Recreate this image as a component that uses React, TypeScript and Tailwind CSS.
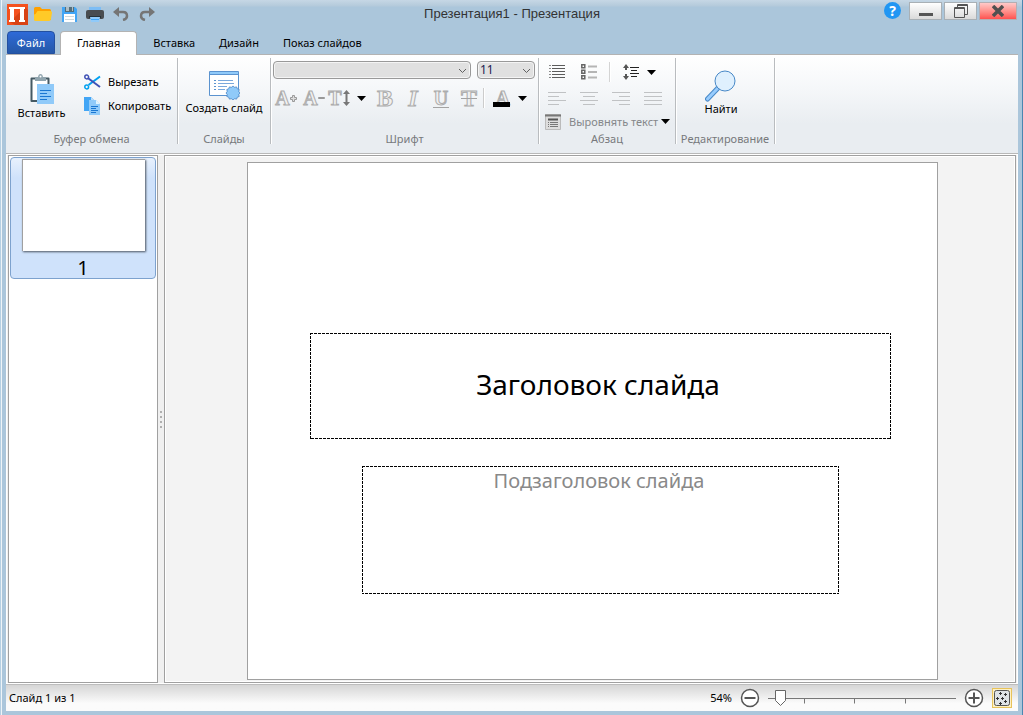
import { useState } from "react";
import type { ReactNode } from "react";

const TABS = ["Главная", "Вставка", "Дизайн", "Показ слайдов"];

const ALIGNMENTS = [
  { label: "По левому краю", d: "M1 1.5h18M1 5.5h11M1 9.5h18M1 13.5h11" },
  { label: "По центру", d: "M1 1.5h18M4 5.5h12M1 9.5h18M4 13.5h12" },
  { label: "По правому краю", d: "M1 1.5h18M8 5.5h11M1 9.5h18M8 13.5h11" },
  { label: "По ширине", d: "M1 1.5h18M1 5.5h18M1 9.5h18M1 13.5h18" },
];

function Caret() {
  return (
    <svg width="9" height="5" viewBox="0 0 9 5" className="shrink-0">
      <path d="M0 0h9L4.5 5z" fill="#000" />
    </svg>
  );
}

function IconButton({ label, className = "", children }: { label: string; className?: string; children: ReactNode }) {
  return (
    <button type="button" aria-label={label} className={`flex shrink-0 items-center justify-center ${className}`}>
      {children}
    </button>
  );
}

function LogoIcon() {
  return (
    <svg width="21" height="21" viewBox="0 0 21 21">
      <path d="M0 0h21v21H0z" fill="#f4511e" />
      <path d="M18 3l3 3v15H8l-5-3z" fill="#d84315" />
      <path d="M2 3h16v2h-1v11h1v2h-6v-2h1V5H7v11h1v2H2v-2h1V5H2z" fill="#fff" />
    </svg>
  );
}

function FolderIcon() {
  return (
    <svg width="18" height="16" viewBox="0 0 18 16">
      <path d="M1.500 1H6l2 2h7.500q1.500 0 1.500 1.500V14H0V2.500Q0 1 1.500 1z" fill="#ffa000" />
      <path d="M3.500 5H16.500q1.500 0 1.500 1.500L17 13q-.3 2-2 2H1.500Q0 15 0 13.500V9q0-1 1.500-1z" fill="#ffca28" />
    </svg>
  );
}

function SaveIcon() {
  return (
    <svg width="17" height="17" viewBox="0 0 17 17">
      <path d="M1 1h13l2 2v13H1z" fill="#42a5f5" />
      <path d="M4 1h9v5H4z" fill="#546e7a" />
      <path d="M5 1h3v4H5zM11 1h1v4h-1z" fill="#b0bec5" />
      <path d="M3 8h11v8H3z" fill="#fff" />
      <path d="M4 10.500h9M4 13.500h9" stroke="#cfd8dc" />
    </svg>
  );
}

function PrintIcon() {
  return (
    <svg width="18" height="17" viewBox="0 0 18 17">
      <path d="M3 1h12v5H3z" fill="#7dbdf5" />
      <path d="M2 4h14q2 0 2 2v5q0 2-2 2H2q-2 0-2-2V6q0-2 2-2z" fill="#484c50" />
      <path d="M3 10h12v2H3z" fill="#263238" />
      <path d="M4 11h10l-1 5H5z" fill="#90caf9" />
      <path d="M5 13.500h8" stroke="#42a5f5" />
    </svg>
  );
}

function UndoIcon() {
  return (
    <svg width="16" height="14" viewBox="0 0 16 14">
      <path d="M6 0v10L0 5z" fill="#757575" />
      <path d="M5 5h5q4 0 4 4 0 3-4 4" fill="none" stroke="#757575" strokeWidth="2.500" />
    </svg>
  );
}

function RedoIcon() {
  return (
    <svg width="16" height="14" viewBox="0 0 16 14">
      <path d="M10 0v10l6-5z" fill="#757575" />
      <path d="M11 5H6Q2 5 2 9q0 3 4 4" fill="none" stroke="#757575" strokeWidth="2.500" />
    </svg>
  );
}

function PasteIcon() {
  return (
    <svg width="24" height="30" viewBox="0 0 24 30">
      <path d="M1.500 4.500h17V27h-17z" fill="#fff" stroke="#455a64" strokeWidth="2" strokeLinejoin="round" />
      <path d="M5 3h3q.5-3 2.500-3T13 3h3v4H5z" fill="#90a4ae" />
      <circle cx="10.500" cy="2.500" r="1" fill="#fff" />
      <path d="M7 10h17v20H7z" fill="#90caf9" />
      <path d="M10 16.500h11M10 19.500h7M10 22.500h11M10 25.500h7" stroke="#1976d2" />
    </svg>
  );
}

function CutIcon() {
  return (
    <svg width="17" height="16" viewBox="0 0 17 16" fill="none">
      <path d="M4.500 11L16 2.500" stroke="#00a0f0" strokeWidth="2" />
      <path d="M4.500 4.500L16 13" stroke="#3f51b5" strokeWidth="2" />
      <circle cx="2.700" cy="3" r="1.900" stroke="#3f51b5" strokeWidth="1.500" />
      <circle cx="2.700" cy="13" r="1.900" stroke="#00a0f0" strokeWidth="1.500" />
    </svg>
  );
}

function CopyIcon() {
  return (
    <svg width="16" height="18" viewBox="0 0 16 18">
      <path d="M0 0h7l4 4v10H0z" fill="#42a5f5" />
      <path d="M7 0v4h4z" fill="#bbdefb" />
      <path d="M5 3h7l4 4v11H5z" fill="#90caf9" />
      <path d="M12 3v4h4z" fill="#e1f5fe" />
      <path d="M7 9.500h7M7 11.500h5M7 13.500h7M7 15.500h5" stroke="#1976d2" />
    </svg>
  );
}

function NewSlideIcon() {
  return (
    <svg width="32" height="30" viewBox="0 0 32 30">
      <path d="M1.500 1.500h29v24h-29z" fill="#fff" stroke="#5b93cf" />
      <path d="M2 2h28v3H2z" fill="#90caf9" />
      <path d="M1 4.500h30" stroke="#5b93cf" />
      <path d="M6 10.500h2M6 13.500h2M6 16.500h2M6 19.500h2" stroke="#5b93cf" />
      <path d="M10 10.500h15M10 13.500h16M10 16.500h9M10 19.500h7" stroke="#7aa8dc" />
      <path
        d="M25 16l1.600 1.300 2-.4.700 1.900 1.900.7-.4 2L32 23l-1.200 1.500.4 2-1.900.7-.7 1.900-2-.4L25 30l-1.600-1.300-2 .4-.7-1.900-1.900-.7.4-2L18 23l1.200-1.500-.4-2 1.900-.7.700-1.900 2 .4z"
        fill="#90caf9"
        stroke="#4a85c5"
        strokeWidth="0.800"
      />
    </svg>
  );
}

function SearchIcon() {
  return (
    <svg width="31" height="32" viewBox="0 0 31 32">
      <path d="M13 18L2.500 29" stroke="#4788c7" strokeWidth="5" strokeLinecap="round" />
      <path d="M13 18L2.500 29" stroke="#98ccfd" strokeWidth="3" strokeLinecap="round" />
      <circle cx="20" cy="11" r="10" fill="#dff0fe" stroke="#4788c7" />
    </svg>
  );
}

// Disabled format letters: hollow glyphs with a grey contour
function Letter({ children, className = "" }: { children: string; className?: string }) {
  return (
    <span
      className={`font-['Liberation_Serif',serif] font-bold leading-5 text-[#f0f0f0] [-webkit-text-stroke:1px_#acacac] ${className}`}
    >
      {children}
    </span>
  );
}

function Group({ title, className, children }: { title: string; className: string; children: ReactNode }) {
  return (
    <section
      aria-label={title}
      className={`flex h-[86px] shrink-0 flex-col border-r border-[#b9bcbf] shadow-[1px_0_0_#fff] ${className}`}
    >
      <div className="flex-1">{children}</div>
      <h2 className="h-[11px] text-center text-[11px] leading-3 text-[#77797c]">{title}</h2>
    </section>
  );
}

function Chevron() {
  return (
    <svg width="9" height="6" viewBox="0 0 9 6" className="pointer-events-none absolute right-1 top-[7px]">
      <path d="M1 1l3.500 3.500L8 1" fill="none" stroke="#606060" />
    </svg>
  );
}

function Outline() {
  return (
    <svg className="pointer-events-none absolute inset-0 h-full w-full" aria-hidden="true">
      <rect width="100%" height="100%" fill="none" stroke="#000" strokeWidth="2" strokeDasharray="3 1" />
    </svg>
  );
}

function TitleBar() {
  return (
    <header className="grid h-[31px] grid-cols-[1fr_auto_1fr] items-start bg-[linear-gradient(#c6d7e5,#b4cadb_6px,#abc6db_7px)]">
      <div className="flex h-7 items-center pl-[2px]">
        <span className="flex w-[26px] justify-center">
          <LogoIcon />
        </span>
        <IconButton label="Открыть" className="w-[26px]"><FolderIcon /></IconButton>
        <IconButton label="Сохранить" className="w-[26px]"><SaveIcon /></IconButton>
        <IconButton label="Печать" className="w-[26px]"><PrintIcon /></IconButton>
        <IconButton label="Отменить" className="w-[26px]"><UndoIcon /></IconButton>
        <IconButton label="Повторить" className="w-[26px]"><RedoIcon /></IconButton>
      </div>
      <h1 className="pt-[6px] font-['Liberation_Sans',sans-serif] text-[13px] leading-4 text-[#333]">
        Презентация1 - Презентация
      </h1>
      <div className="flex justify-end gap-[2px] pr-[5px] pt-[2px]">
        <IconButton label="Справка" className="mr-[6px] h-[17px] w-[17px] rounded-full bg-[#2196f3] text-sm font-bold text-white">
          ?
        </IconButton>
        <IconButton label="Свернуть" className="h-[18px] w-[33px] border border-[#a9b0b5] bg-linear-to-b from-white to-[#dadada]">
          <svg width="14" height="16" viewBox="0 0 14 16"><path d="M0 10h14v3H0z" fill="#555" /></svg>
        </IconButton>
        <IconButton label="Развернуть" className="h-[18px] w-[33px] border border-[#a9b0b5] bg-linear-to-b from-white to-[#dadada]">
          <svg width="14" height="14" viewBox="0 0 14 14" fill="none" stroke="#555">
            <path d="M3.500 3V.5h10v10H11M3 1.500h11" />
            <path d="M.5 3.500h10v10H.5zM0 4.500h11" />
          </svg>
        </IconButton>
        <IconButton label="Закрыть" className="h-[18px] w-[38px] border border-[#b5aeb2] bg-linear-to-b from-[#ffc9c9] to-[#ff5050]">
          <svg width="12" height="12" viewBox="0 0 12 12"><path d="M1 1l10 10M11 1L1 11" stroke="#505050" strokeWidth="3.500" /></svg>
        </IconButton>
      </div>
    </header>
  );
}

function TabBar({ active, onSelect }: { active: string; onSelect: (tab: string) => void }) {
  return (
    <nav className="flex h-[24px] border-b border-[#b3b3b3] pl-[1px] text-[11px] leading-[22px]">
      <button type="button" className="mr-[5px] h-[23px] w-[48px] rounded-t-sm border border-[#2350a0] bg-linear-to-b from-[#2e6ad8] to-[#2558a8] leading-[22px] text-white">
        Файл
      </button>
      {TABS.map((tab) => (
        <button
          key={tab}
          type="button"
          onClick={() => onSelect(tab)}
          className={
            tab === active
              ? "mr-1 h-[24px] rounded-t-sm border border-b-0 border-[#b3b3b3] bg-white px-4 pb-[2px]"
              : "px-3"
          }
        >
          {tab}
        </button>
      ))}
    </nav>
  );
}

function Ribbon() {
  return (
    <div className="flex h-[99px] overflow-hidden border-b border-[#b8b8b8] bg-[linear-gradient(#fff,#f5f7f9_35%,#e9edf1_70%)] pt-[3px] text-[11px] leading-[14px]">
      <Group title="Буфер обмена" className="w-[172px]">
        <div className="flex">
          <button type="button" className="flex w-[71px] flex-col items-center gap-[2px] pt-4">
            <PasteIcon />
            Вставить
          </button>
          <div className="flex flex-col pl-[7px] pt-3">
            <button type="button" className="flex h-6 items-center">
              <span className="w-[24px]"><CutIcon /></span>
              Вырезать
            </button>
            <button type="button" className="flex h-6 items-center">
              <span className="w-[24px]"><CopyIcon /></span>
              Копировать
            </button>
          </div>
        </div>
      </Group>
      <Group title="Слайды" className="w-[93px]">
        <button type="button" className="flex w-full flex-col items-center gap-[1px] whitespace-nowrap pt-3">
          <NewSlideIcon />
          Создать слайд
        </button>
      </Group>
      <Group title="Шрифт" className="w-[268px]">
        <div className="flex gap-[6px] pl-[2px] pt-[3px]">
          <div className="relative w-[198px]">
            <select aria-label="Шрифт" className="h-[18px] w-full appearance-none rounded-sm border border-[#999] bg-[#e0e0e0] shadow-[inset_0_0_0_1px_#f4f4f4]">
              <option></option>
            </select>
            <Chevron />
          </div>
          <div className="relative w-[58px]">
            <select aria-label="Размер" className="h-[18px] w-full appearance-none rounded-sm border border-[#999] bg-[#e0e0e0] pl-[2px] text-xs leading-4 text-[#1c1c50] shadow-[inset_0_0_0_1px_#f4f4f4]">
              <option>11</option>
            </select>
            <Chevron />
          </div>
        </div>
        <div className="flex items-center pl-px pt-[7px] [&>button]:h-6">
          <IconButton label="Увеличить шрифт" className="w-[28px]">
            <Letter className="text-xl">A</Letter>
            <svg width="7" height="7" viewBox="0 0 7 7"><path d="M2.500.5h2v2h2v2h-2v2h-2v-2h-2v-2h2z" fill="#ddd" stroke="#999" /></svg>
          </IconButton>
          <IconButton label="Уменьшить шрифт" className="w-[28px]">
            <Letter className="text-xl">A</Letter>
            <svg width="7" height="7" viewBox="0 0 7 7"><path d="M.5 2.500h6v1h-6z" fill="#ddd" stroke="#999" /></svg>
          </IconButton>
          <IconButton label="Интервал" className="w-[38px] gap-[1px]">
            <Letter className="text-xl">T</Letter>
            <svg width="7" height="16" viewBox="0 0 7 16"><path d="M3.500 0L7 4H4.500v8H7l-3.500 4L0 12h2.500V4H0z" fill="#777" /></svg>
            <span className="pl-[6px]"><Caret /></span>
          </IconButton>
          <IconButton label="Полужирный" className="ml-[5px] w-[28px]"><Letter className="text-2xl">B</Letter></IconButton>
          <IconButton label="Курсив" className="w-[28px]"><Letter className="text-2xl italic">I</Letter></IconButton>
          <IconButton label="Подчёркнутый" className="relative w-[28px]">
            <Letter className="text-xl">U</Letter>
            <span className="absolute bottom-[2px] h-px w-4 bg-[#a3a3a3]" />
          </IconButton>
          <IconButton label="Зачёркнутый" className="relative w-[28px]">
            <Letter className="text-2xl">T</Letter>
            <span className="absolute top-3 h-px w-4 bg-[#a3a3a3]" />
          </IconButton>
          <span className="h-5 w-[2px] border-l border-[#ccc] bg-white" />
          <IconButton label="Цвет текста" className="relative ml-[2px] w-[40px] justify-end! gap-2">
            <Letter className="text-xl">A</Letter>
            <span className="absolute bottom-[3px] left-[6px] h-[5px] w-[17px] bg-black" />
            <Caret />
          </IconButton>
        </div>
      </Group>
      <Group title="Абзац" className="w-[137px]">
        <div className="flex h-[28px] items-center pl-[10px]">
          <IconButton label="Маркеры" className="w-4">
            <svg width="16" height="16" viewBox="0 0 16 16">
              <path d="M0 1.500h2M0 4.500h2M0 7.500h2M0 10.500h2M0 13.500h2" stroke="#888" />
              <path d="M3 1.500h13M3 4.500h13M3 7.500h13M3 10.500h13M3 13.500h13" stroke="#5c5c5c" />
            </svg>
          </IconButton>
          <IconButton label="Список" className="ml-4 w-4">
            <svg width="16" height="16" viewBox="0 0 16 16">
              <path d="M.8.8h3v3h-3zM.8 6.300h3v3h-3zM.8 11.800h3v3h-3z" fill="none" stroke="#666" strokeWidth="1.500" />
              <path d="M7 2.500h9M7 8h9M7 13.500h9" stroke="#b5b5b5" strokeWidth="2" />
            </svg>
          </IconButton>
          <span className="mx-3 h-5 w-[2px] border-l border-[#d4d4d4] bg-white" />
          <IconButton label="Междустрочный интервал" className="gap-2">
            <svg width="16" height="16" viewBox="0 0 16 16">
              <path d="M0 4l3-4 3 4H4v2H2V4zM0 12l3 4 3-4H4v-2H2v2z" fill="#555" />
              <path d="M7 3.500h9M8 6.500h6M7 9.500h9M8 12.500h6" stroke="#222" />
            </svg>
            <Caret />
          </IconButton>
        </div>
        <div className="flex h-[25px] items-center gap-3 pl-2">
          {ALIGNMENTS.map((item) => (
            <IconButton key={item.label} label={item.label} className="w-5">
              <svg width="20" height="15" viewBox="0 0 20 15"><path d={item.d} stroke="#c0c2c4" /></svg>
            </IconButton>
          ))}
        </div>
        <button type="button" className="flex h-[21px] w-full items-center pl-[6px] text-[#85878a]">
          <svg width="16" height="16" viewBox="0 0 16 16">
            <path d="M.5.5h15v15H.5z" fill="#ddd" stroke="#bbb" />
            <path d="M0 1.500h16" stroke="#777" strokeWidth="2" />
            <path d="M3 5.500h10" stroke="#555" strokeWidth="2" />
            <path d="M3 8.500h1M5 8.500h8M3 10.500h1M5 10.500h8M3 12.500h1M5 12.500h8" stroke="#777" />
          </svg>
          <span className="whitespace-nowrap pl-2 pr-[3px]">Выровнять текст</span>
          <Caret />
        </button>
      </Group>
      <Group title="Редактирование" className="w-[99px]">
        <button type="button" className="mx-auto flex flex-col items-center pr-[8px] pt-3">
          <SearchIcon />
          Найти
        </button>
      </Group>
    </div>
  );
}

function StatusBar() {
  const [zoom, setZoom] = useState(54);
  return (
    <footer className="flex h-[27px] items-center border-t border-[#bdbdbd] bg-linear-to-b from-[#d6d6d6] to-[#fbfbfb] to-70% pl-[3px] pr-[6px] text-[11px] leading-[14px]">
      <span className="flex-1">Слайд 1 из 1</span>
      <label htmlFor="zoom" className="pr-2">{zoom}%</label>
      <IconButton label="Уменьшить">
        <svg width="20" height="20" viewBox="0 0 20 20" fill="none" stroke="#555">
          <circle cx="10" cy="10" r="8.500" fill="#fff" strokeWidth="1.500" />
          <path d="M4.500 10h11" strokeWidth="2" />
        </svg>
      </IconButton>
      <div className="relative mx-[7px] h-5 w-[190px]">
        <svg width="190" height="20" viewBox="0 0 190 20">
          <path d="M1 10.500h188M37.500 10.500v5M87.500 10.500v5M138.500 10.500v5" stroke="#777" fill="none" />
          <path d="M8.500 2.500h10v10l-5 5-5-5z" fill="#fff" stroke="#666" />
        </svg>
        <input
          id="zoom"
          type="range"
          min={50}
          max={200}
          value={zoom}
          onChange={(e) => setZoom(Number(e.target.value))}
          className="absolute inset-0 w-full opacity-0"
        />
      </div>
      <IconButton label="Увеличить">
        <svg width="20" height="20" viewBox="0 0 20 20" fill="none" stroke="#555">
          <circle cx="10" cy="10" r="8.500" fill="#fff" strokeWidth="1.500" />
          <path d="M4.500 10h11M10 4.500v11" strokeWidth="2" />
        </svg>
      </IconButton>
      <IconButton label="Вписать в окно" className="ml-2 h-5 w-5 border border-[#e8c35a] bg-[#fdf0c4]">
        <svg width="16" height="16" viewBox="0 0 16 16">
          <rect x=".5" y=".5" width="15" height="15" rx="2" fill="#dfe3e6" stroke="#555" />
          <path d="M6.500 2v3M5 3.500h3M11.500 3v3M10 4.500h3M3.500 7v3M2 8.500h3M7 8.500h3M8.500 7v3M6.500 12v3M5 13.500h3M11.500 10v3M10 11.500h3" stroke="#333" />
        </svg>
      </IconButton>
    </footer>
  );
}

export default function App() {
  const [tab, setTab] = useState("Главная");

  return (
    <div className="flex h-screen flex-col border-l border-r border-l-[#b5cfe2] border-r-[#4a86b0] bg-[#abc6db] font-['Noto_Sans','Open_Sans',sans-serif] text-black">
      <div className="flex min-h-0 flex-1 flex-col border-l border-[#eef4f8]">
        <TitleBar />
        <div className="mx-1 mb-1 flex min-h-0 flex-1 flex-col">
          <TabBar active={tab} onSelect={setTab} />
          <Ribbon />
          <div className="flex min-h-0 flex-1 border border-white bg-[#f0f0f0] pl-px pr-px">
            <aside className="w-[150px] shrink-0 border border-[#a0a0a0] bg-white p-px">
              <button type="button" className="flex w-full flex-col items-center rounded-sm border border-[#7da2ce] bg-[linear-gradient(#e8f1fd,#cfe2fb_20px)] pt-px">
                <span className="h-[92px] w-[123px] border-l border-t border-[#a0a0a0] bg-white shadow-[1px_1px_2px_#4b5460]" />
                <span className="pt-[7px] text-xl leading-5">1</span>
              </button>
            </aside>
            <div className="flex w-[6px] shrink-0 flex-col items-center justify-center gap-[3px]">
              {[0, 1, 2, 3].map((n) => (
                <span key={n} className="h-[2px] w-[2px] bg-[#b0b0b0]" />
              ))}
            </div>
            <main className="flex min-w-0 flex-1 justify-center border border-[#a0a0a0] bg-[#f3f3f3] pb-[2px] pl-1 pt-[6px] shadow-[inset_0_0_0_1px_#fff]">
              <article className="relative aspect-[691/518] h-full border border-[#a0a0a0] bg-white">
                <div className="absolute left-[9%] top-[33%] flex h-[106px] w-[581px] items-center justify-center pb-1 pr-1 text-[28px]">
                  <Outline />
                  Заголовок слайда
                </div>
                <div className="absolute left-[114px] top-[303px] h-[128px] w-[477px] pr-[2px] pt-px text-center text-xl leading-7 text-[#898989]">
                  <Outline />
                  Подзаголовок слайда
                </div>
              </article>
            </main>
          </div>
          <StatusBar />
        </div>
      </div>
    </div>
  );
}
